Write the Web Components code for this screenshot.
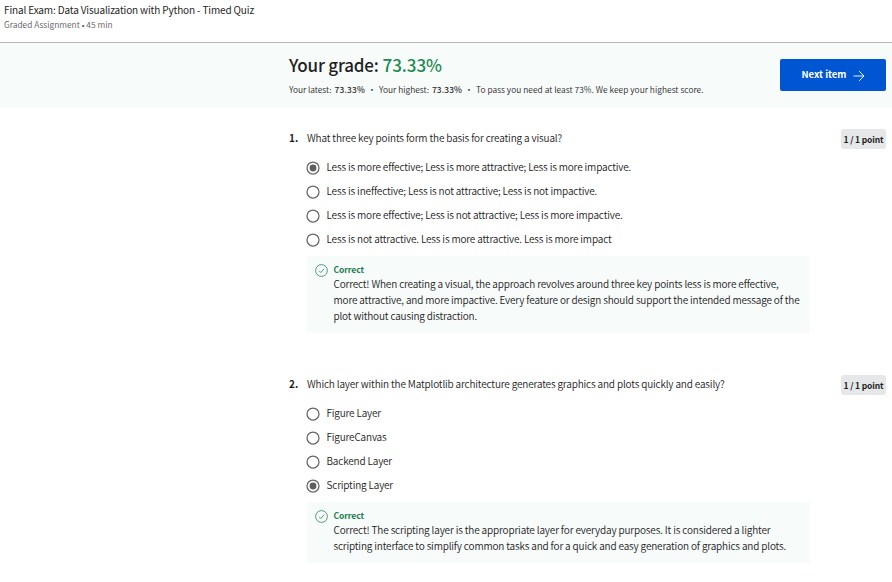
<!DOCTYPE html>
<html lang="en"><head><meta charset="utf-8"><title>Timed Quiz</title>
<style>
html,body{margin:0;background:#fff;height:582px;overflow:hidden}
body{font-family:"Noto Sans CJK SC","Noto Sans",sans-serif;font-size:10px;color:#1f1f1f}
</style></head><body>
<quiz-page></quiz-page>
<script>
// One line of text whose tracking is set so that it spans its "w" attribute in pixels.
class TextRun extends HTMLElement{
  connectedCallback(){
    if(this.shadowRoot)return;
    this.attachShadow({mode:'open'}).innerHTML=`<style>:host{display:block;white-space:nowrap;width:max-content}span{display:inline-block}</style><span><slot></slot></span>`;
    const s=this.shadowRoot.querySelector('span'),w=+this.getAttribute('w');
    if(w){
      const n=this.textContent.length;
      s.style.letterSpacing=((w-s.getBoundingClientRect().width)/n)+'px';
    }
  }
}
class QuizHeader extends HTMLElement{
  constructor(){super();this.attachShadow({mode:'open'}).innerHTML=`<style>
  :host{display:block;height:42px;border-bottom:1px solid #b8b8b8;padding-left:4px;box-sizing:content-box}
  .t{font-size:10px;line-height:20px;color:#1f1f1f;font-weight:400}.s{font-size:8.4px;line-height:10px;color:#5b5b5b;font-weight:350;margin-top:-1px}
  .s b{font:400 8px/8px "Liberation Sans",sans-serif}
  </style><text-run class="t" w="250">Final Exam: Data Visualization with Python - Timed Quiz</text-run><text-run class="s" w="108.5">Graded Assignment <b>•</b> 45 min</text-run>`}
}
class GradeBand extends HTMLElement{
  constructor(){super();this.attachShadow({mode:'open'}).innerHTML=`<style>
  :host{display:flex;justify-content:space-between;height:65px;background:#f7fbfa;padding:0 6px 0 289px;box-sizing:border-box}
  .g{display:flex;gap:4px;font-size:17px;line-height:26px;padding-top:9px;font-weight:500}
  .v{color:#1d8a50}
  .s{display:flex;font-size:8.4px;line-height:12px;margin-top:2px;padding-top:3px;font-weight:350;color:#2a2a2a}
  .b{font-weight:500;margin-left:3px}.d{width:14px;text-align:center}
  button{all:unset;box-sizing:border-box;width:106px;height:32px;margin-top:16px;border-radius:2px;background:#0056d2;color:#fff;display:flex;align-items:center;padding-left:21.5px;gap:6.5px;font-weight:700;font-size:9.5px;line-height:28px}
  text-run{flex:none}button text-run{margin-top:-2px}
  svg{display:block;margin-top:1px}
  </style><div><div class="g"><text-run w="89.5">Your grade:</text-run><text-run class="v" w="59.5">73.33%</text-run></div>
  <div class="s"><text-run w="42.5">Your latest:</text-run><text-run class="b" w="30.5">73.33%</text-run><span class="d">•</span><text-run w="50">Your highest:</text-run><text-run class="b" w="30">73.33%</text-run><span class="d">•</span><text-run w="227.5">To pass you need at least 73%. We keep your highest score.</text-run></div></div>
  <button><text-run w="45">Next item</text-run><svg width="12" height="12" viewBox="0 0 12 12" fill="none" stroke="#fff" stroke-width=".9"><path d="M.5 6H11M6 1l5 5-5 5"/></svg></button>`}
}
class QuizOption extends HTMLElement{
  connectedCallback(){
    const on=this.hasAttribute('checked');
    this.attachShadow({mode:'open'}).innerHTML=`<style>
  :host{display:flex;height:24px;gap:6.5px;line-height:22px;color:#222;font-weight:350;margin-left:-1px}svg{display:block;margin-top:5px}
  </style><svg width="14" height="14" viewBox="0 0 14 14"><circle cx="7" cy="7" r="6" fill="#fff" stroke="#666" stroke-width="1.25"/>${on?'<circle cx="7" cy="7" r="3.4" fill="#5f5f5f"/>':''}</svg><slot></slot>`}
}
class QuizFeedback extends HTMLElement{
  constructor(){super();this.attachShadow({mode:'open'}).innerHTML=`<style>
  :host{display:flex;box-sizing:border-box;width:503px;margin-top:4px;background:#f7fbfa;padding:6px 0 9px 8px;gap:5.5px;line-height:16px;color:#222;font-weight:350}
  .c{font-size:8.5px;line-height:14px;font-weight:700;color:#1d7c50}svg{display:block;margin-top:2px}
  </style><svg width="13" height="13" viewBox="0 0 13 13" fill="none" stroke="#2f8d63" stroke-width=".85"><circle cx="6.5" cy="6.5" r="5.9"/><path d="M4 6.7l1.8 1.8L9.2 4.7"/></svg><div><text-run class="c" w="30.5">Correct</text-run><slot></slot></div>`}
}
class QuizQuestion extends HTMLElement{
  connectedCallback(){this.attachShadow({mode:'open'}).innerHTML=`<style>
  :host{display:grid;grid-template-columns:18px 1fr 45px;padding:0 6px 0 289px}
  .n{font-weight:700;line-height:20px}
  .p{height:20px;margin-top:1px;box-sizing:border-box;padding-left:2.5px;border-radius:3px;background:#e5e7e8;font-size:8.5px;font-weight:700;line-height:20px}
  .body{grid-column:2;padding-top:7px}
  </style><div class="n">${this.getAttribute('n')}.</div><slot name="q"></slot><div class="p"><text-run w="40">1 / 1 point</text-run></div><div class="body"><slot></slot></div>`}
}
class QuizPage extends HTMLElement{
  constructor(){super();this.attachShadow({mode:'open'}).innerHTML=`<style>
  :host{display:block}main{padding-top:20px;display:flex;flex-direction:column;gap:41px}[slot=q]{line-height:20px;color:#222;font-weight:350}
  </style><quiz-header></quiz-header><grade-band></grade-band><main>
  <quiz-question n="1"><text-run slot="q" w="255">What three key points form the basis for creating a visual?</text-run>
  <quiz-option checked><text-run w="304.5">Less is more effective; Less is more attractive; Less is more impactive.</text-run></quiz-option>
  <quiz-option><text-run w="270.5">Less is ineffective; Less is not attractive; Less is not impactive.</text-run></quiz-option>
  <quiz-option><text-run w="296">Less is more effective; Less is not attractive; Less is more impactive.</text-run></quiz-option>
  <quiz-option><text-run w="285">Less is not attractive. Less is more attractive. Less is more impact</text-run></quiz-option>
  <quiz-feedback><text-run w="445">Correct! When creating a visual, the approach revolves around three key points less is more effective,</text-run><text-run w="466">more attractive, and more impactive. Every feature or design should support the intended message of the</text-run><text-run w="143.5">plot without causing distraction.</text-run></quiz-feedback></quiz-question>
  <quiz-question n="2"><text-run slot="q" w="417.5">Which layer within the Matplotlib architecture generates graphics and plots quickly and easily?</text-run>
  <quiz-option><text-run w="54.5">Figure Layer</text-run></quiz-option>
  <quiz-option><text-run w="60">FigureCanvas</text-run></quiz-option>
  <quiz-option><text-run w="65.5">Backend Layer</text-run></quiz-option>
  <quiz-option checked><text-run w="66.5">Scripting Layer</text-run></quiz-option>
  <quiz-feedback><text-run w="437">Correct! The scripting layer is the appropriate layer for everyday purposes. It is considered a lighter</text-run><text-run w="452.5">scripting interface to simplify common tasks and for a quick and easy generation of graphics and plots.</text-run></quiz-feedback></quiz-question>
  </main>`}
}
customElements.define('quiz-header',QuizHeader);
customElements.define('grade-band',GradeBand);
customElements.define('quiz-option',QuizOption);
customElements.define('quiz-feedback',QuizFeedback);
customElements.define('quiz-question',QuizQuestion);
customElements.define('quiz-page',QuizPage);
customElements.define('text-run',TextRun);
</script></body></html>
